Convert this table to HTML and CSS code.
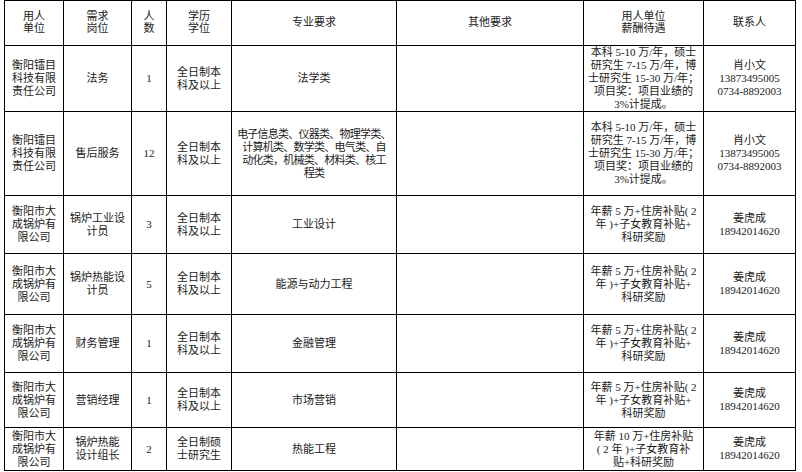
FILE: index.html
```html
<!DOCTYPE html>
<html lang="zh-CN">
<head>
<meta charset="utf-8">
<title>招聘岗位表</title>
<link rel="stylesheet" href="styles.css">
</head>
<body>
<table class="jobs">
  <colgroup>
    <col class="c-unit"><col class="c-post"><col class="c-num"><col class="c-edu"><col class="c-major"><col class="c-other"><col class="c-pay"><col class="c-contact">
  </colgroup>
  <thead>
    <tr class="r-head">
      <th>用人<br>单位</th>
      <th>需求<br>岗位</th>
      <th>人<br>数</th>
      <th>学历<br>学位</th>
      <th>专业要求</th>
      <th>其他要求</th>
      <th>用人单位<br>薪酬待遇</th>
      <th>联系人</th>
    </tr>
  </thead>
  <tbody>
    <tr class="r1">
      <td>衡阳镭目<br>科技有限<br>责任公司</td>
      <td>法务</td>
      <td class="num">1</td>
      <td>全日制本<br>科及以上</td>
      <td>法学类</td>
      <td></td>
      <td>本科 5-10 万/年，硕士<br>研究生 7-15 万/年，博<br>士研究生 15-30 万/年；<br>项目奖：项目业绩的<br>3%计提成。</td>
      <td>肖小文<br>13873495005<br>0734-8892003</td>
    </tr>
    <tr class="r2">
      <td>衡阳镭目<br>科技有限<br>责任公司</td>
      <td>售后服务</td>
      <td class="num">12</td>
      <td>全日制本<br>科及以上</td>
      <td class="tight">电子信息类、仪器类、物理学类、<br>计算机类、数学类、电气类、自<br>动化类，机械类、材料类、核工<br>程类</td>
      <td></td>
      <td>本科 5-10 万/年，硕士<br>研究生 7-15 万/年，博<br>士研究生 15-30 万/年；<br>项目奖：项目业绩的<br>3%计提成。</td>
      <td>肖小文<br>13873495005<br>0734-8892003</td>
    </tr>
    <tr class="r3">
      <td>衡阳市大<br>成锅炉有<br>限公司</td>
      <td>锅炉工业设<br>计员</td>
      <td class="num">3</td>
      <td>全日制本<br>科及以上</td>
      <td>工业设计</td>
      <td></td>
      <td>年薪 5 万+住房补贴( 2<br>年 )+子女教育补贴+<br>科研奖励</td>
      <td>姜虎成<br>18942014620</td>
    </tr>
    <tr class="r4">
      <td>衡阳市大<br>成锅炉有<br>限公司</td>
      <td>锅炉热能设<br>计员</td>
      <td class="num">5</td>
      <td>全日制本<br>科及以上</td>
      <td>能源与动力工程</td>
      <td></td>
      <td>年薪 5 万+住房补贴( 2<br>年 )+子女教育补贴+<br>科研奖励</td>
      <td>姜虎成<br>18942014620</td>
    </tr>
    <tr class="r5">
      <td>衡阳市大<br>成锅炉有<br>限公司</td>
      <td>财务管理</td>
      <td class="num">1</td>
      <td>全日制本<br>科及以上</td>
      <td>金融管理</td>
      <td></td>
      <td>年薪 5 万+住房补贴( 2<br>年 )+子女教育补贴+<br>科研奖励</td>
      <td>姜虎成<br>18942014620</td>
    </tr>
    <tr class="r6">
      <td>衡阳市大<br>成锅炉有<br>限公司</td>
      <td>营销经理</td>
      <td class="num">1</td>
      <td>全日制本<br>科及以上</td>
      <td>市场营销</td>
      <td></td>
      <td>年薪 5 万+住房补贴( 2<br>年 )+子女教育补贴+<br>科研奖励</td>
      <td>姜虎成<br>18942014620</td>
    </tr>
    <tr class="r7">
      <td>衡阳市大<br>成锅炉有<br>限公司</td>
      <td>锅炉热能<br>设计组长</td>
      <td class="num">2</td>
      <td>全日制硕<br>士研究生</td>
      <td>热能工程</td>
      <td></td>
      <td>年薪 10 万+住房补贴<br>( 2 年 )+子女教育补<br>贴+科研奖励</td>
      <td>姜虎成<br>18942014620</td>
    </tr>
  </tbody>
</table>
</body>
</html>
```

FILE: styles.css
```css
html, body {
  margin: 0;
  padding: 0;
  background: #ffffff;
}

body {
  padding: 0 0 0 4px;
  font-family: "Liberation Serif", "Noto Sans CJK SC", serif;
  font-size: 11px;
  line-height: 13px;
  color: #1a1a1a;
}

.jobs {
  border-collapse: collapse;
  table-layout: fixed;
  width: 792px;
}

.c-unit { width: 59px; }
.c-post { width: 68px; }
.c-num { width: 35px; }
.c-edu { width: 65px; }
.c-major { width: 165px; }
.c-other { width: 187px; }
.c-pay { width: 120px; }
.c-contact { width: 92px; }

.jobs th,
.jobs td {
  border: 1px solid #000000;
  padding: 0 2px;
  text-align: center;
  vertical-align: middle;
  white-space: nowrap;
  font-weight: normal;
  overflow: hidden;
}

.jobs th {
  line-height: 12px;
  padding-top: 0;
  padding-bottom: 2px;
}

.jobs .tight {
  letter-spacing: -0.75px;
}

.r-head { height: 45px; }
.r1 { height: 65px; }
.r2 { height: 84px; }
.r3 { height: 58px; }
.r4 { height: 61px; }
.r5 { height: 58px; }
.r6 { height: 55px; }
.r7 { height: 43px; }
```
